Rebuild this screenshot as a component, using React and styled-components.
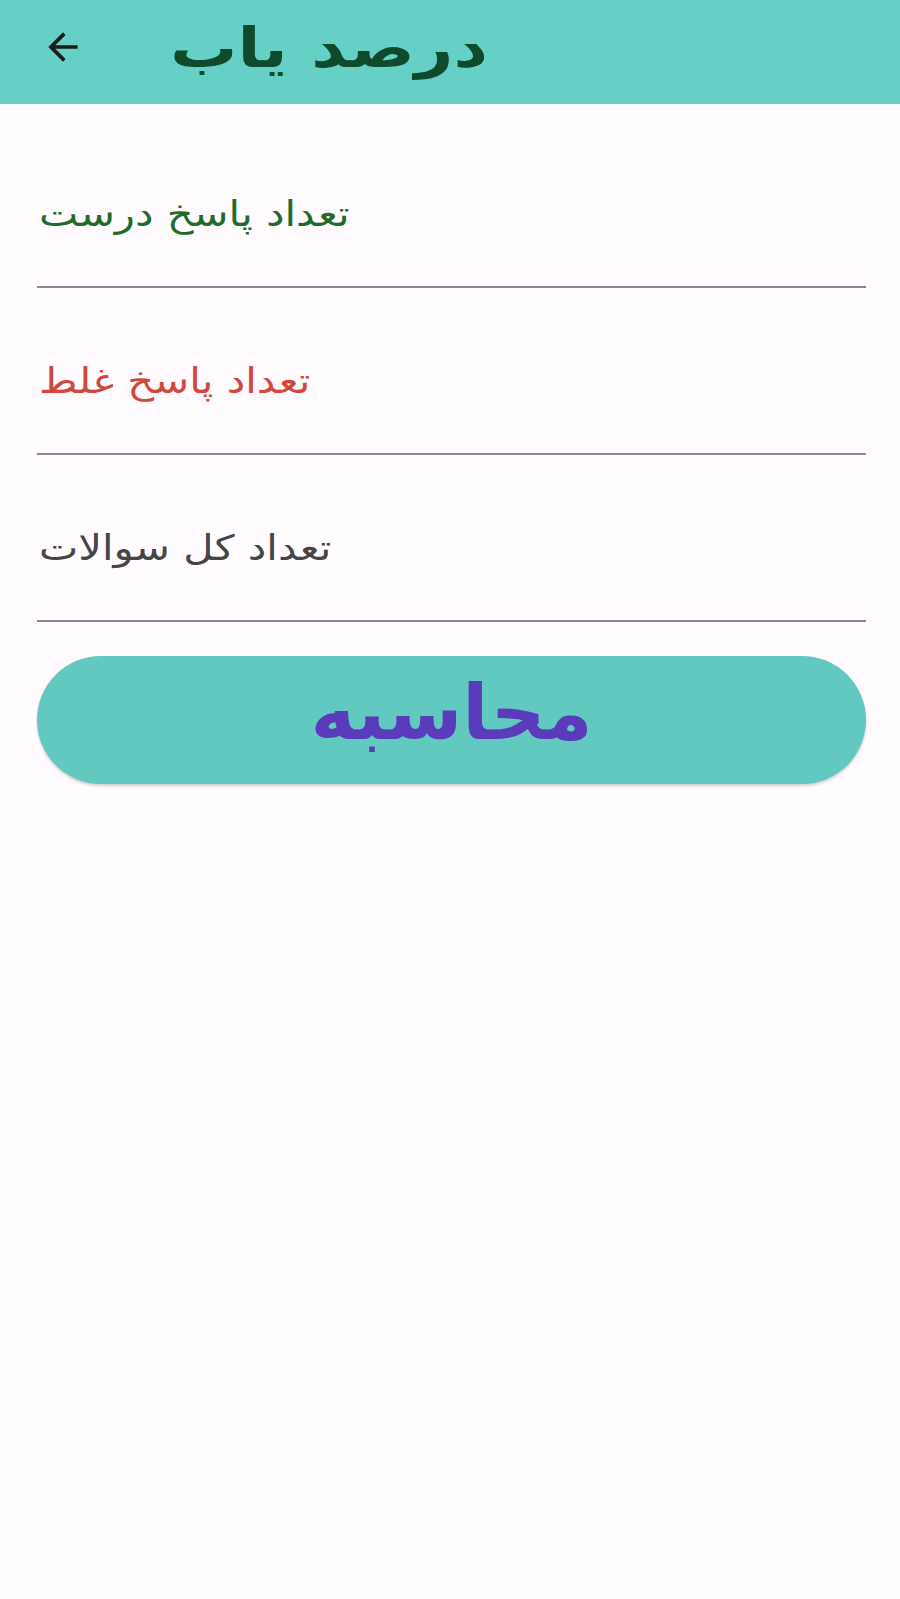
import React from "react";
import styled, { createGlobalStyle } from "styled-components";

const GlobalStyle = createGlobalStyle`
  html, body {
    margin: 0;
    padding: 0;
    background: #fffbfe;
  }
  body {
    font-family: "DejaVu Sans", "Noto Sans", sans-serif;
  }
`;

const Page = styled.div`
  width: 900px;
  min-height: 1599px;
  background: #fffbfe;
`;

const AppBar = styled.header`
  height: 104px;
  background: #66d0c6;
  display: flex;
  align-items: center;
  padding-left: 40px;
  box-sizing: border-box;
`;

const BackButton = styled.button`
  width: 46px;
  height: 46px;
  padding: 0;
  border: none;
  background: transparent;
  display: flex;
  align-items: center;
  justify-content: center;
  margin-top: -10px;
`;

const Title = styled.h1`
  margin: -8px 0 0 84px;
  font-family: "DejaVu Sans", sans-serif;
  font-weight: bold;
  font-size: 55px;
  color: #0f4a2c;
  direction: rtl;
  transform: scaleX(1.22);
  transform-origin: left center;
`;

const Form = styled.main`
  padding: 17px 34px 0 37px;
  display: flex;
  flex-direction: column;
`;

const Field = styled.div`
  height: 167px;
  border-bottom: 2px solid #8a8a8e;
  box-sizing: border-box;
  display: flex;
  align-items: flex-end;
  padding: 0 0 52px 2px;
`;

const Hint = styled.span`
  direction: rtl;
  font-family: "DejaVu Sans", sans-serif;
  font-size: 35px;
  line-height: 40px;
  color: ${(p) => p.$color};
  transform: scaleX(1.19);
  transform-origin: left center;
`;

const CalcButton = styled.button`
  margin-top: 34px;
  height: 128px;
  border: none;
  border-radius: 64px;
  background: #62c9c0;
  box-shadow: 0 2px 3px rgba(0, 0, 0, 0.18);
  font-family: "DejaVu Sans", sans-serif;
  font-weight: bold;
  font-size: 76px;
  line-height: 1;
  color: #5a3bbb;
  direction: rtl;
  padding: 0 0 14px;
`;

const fields = [
  { label: "تعداد پاسخ درست", color: "#1e6b2b" },
  { label: "تعداد پاسخ غلط", color: "#d0473c" },
  { label: "تعداد کل سوالات", color: "#454545" },
];

export default function App() {
  return (
    <Page>
      <GlobalStyle />
      <AppBar>
        <BackButton aria-label="back">
          <svg width="44" height="44" viewBox="0 0 24 24">
            <path
              d="M20 11H7.83l5.59-5.59L12 4l-8 8 8 8 1.41-1.41L7.83 13H20v-2z"
              fill="#1a1c1e"
            />
          </svg>
        </BackButton>
        <Title>درصد یاب</Title>
      </AppBar>
      <Form>
        {fields.map((f) => (
          <Field key={f.label}>
            <Hint $color={f.color}>{f.label}</Hint>
          </Field>
        ))}
        <CalcButton>محاسبه</CalcButton>
      </Form>
    </Page>
  );
}
